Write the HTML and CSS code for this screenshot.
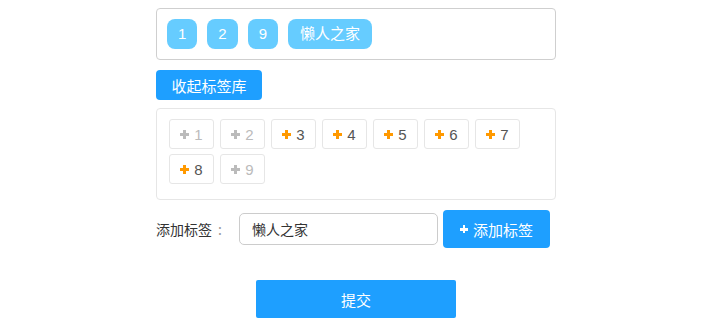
FILE: index.html
```html
<!DOCTYPE html>
<html lang="zh">
<head>
<meta charset="utf-8">
<title>标签</title>
<link rel="stylesheet" href="styles.css">
</head>
<body>
<div class="wrap">
  <div class="chosen">
    <span class="tag">1</span>
    <span class="tag">2</span>
    <span class="tag">9</span>
    <span class="tag wide">懒人之家</span>
  </div>
  <button class="toggle">收起标签库</button>
  <div class="library">
    <span class="item off"><i class="plus"></i>1</span>
    <span class="item off"><i class="plus"></i>2</span>
    <span class="item"><i class="plus"></i>3</span>
    <span class="item"><i class="plus"></i>4</span>
    <span class="item"><i class="plus"></i>5</span>
    <span class="item"><i class="plus"></i>6</span>
    <span class="item"><i class="plus"></i>7</span>
    <span class="item"><i class="plus"></i>8</span>
    <span class="item off"><i class="plus"></i>9</span>
  </div>
  <div class="add-row">
    <label class="add-label">添加标签<span class="colon">:</span></label>
    <input class="add-input" type="text" value="懒人之家">
    <button class="add-btn"><i class="plus"></i>添加标签</button>
  </div>
  <div class="submit-row">
    <button class="submit">提交</button>
  </div>
</div>
</body>
</html>
```
FILE: styles.css
```css
* { box-sizing: border-box; }
body {
  margin: 0;
  padding-top: 8px;
  background: #fff;
  font-family: "Liberation Sans", "Noto Sans CJK SC", sans-serif;
  font-size: 14px;
  color: #333;
}
.wrap {
  width: 400px;
  margin-left: 156px;
}
.chosen {
  border: 1px solid #cfcfcf;
  border-radius: 4px;
  padding: 10px;
  display: flex;
  gap: 10px;
  height: 52px;
}
.tag {
  height: 30px;
  line-height: 30px;
  padding: 0 11px;
  min-width: 30px;
  text-align: center;
  background: #66ccff;
  color: #fff;
  border-radius: 8px;
  font-size: 15px;
}
.tag.wide { padding: 0 12px; }
.toggle {
  display: block;
  margin-top: 10px;
  width: 106px;
  height: 30px;
  border: 0;
  border-radius: 4px;
  background: #1e9fff;
  color: #fff;
  font-family: "Noto Sans CJK SC", sans-serif;
  font-size: 15px;
  padding: 0;
}
.library {
  margin-top: 8px;
  border: 1px solid #e6e6e6;
  border-radius: 4px;
  padding: 10px 12px;
  display: flex;
  flex-wrap: wrap;
  column-gap: 6px;
  row-gap: 5px;
  height: 92px;
  align-content: flex-start;
}
.item {
  width: 45px;
  height: 30px;
  border: 1px solid #e6e6e6;
  border-radius: 3px;
  display: flex;
  align-items: center;
  justify-content: center;
  gap: 5px;
  color: #555;
  font-size: 15px;
}
.item .plus { color: #ff9900; }
.item.off { color: #bbb; }
.item.off .plus { color: #bbb; }
.plus {
  display: inline-block;
  position: relative;
  width: 9px;
  height: 9px;
  color: #fff;
}
.plus::before, .plus::after {
  content: "";
  position: absolute;
  background: currentColor;
}
.plus::before { left: 0; right: 0; top: 3px; height: 3px; }
.plus::after { top: 0; bottom: 0; left: 3px; width: 3px; }
.add-row {
  margin-top: 10px;
  display: flex;
  align-items: center;
  height: 38px;
}
.add-label {
  width: 83px;
  font-family: "Noto Sans CJK SC", sans-serif;
  font-size: 14px;
  color: #333;
}
.colon {
  margin-left: 6px;
  color: #999;
}
.add-input {
  width: 199px;
  height: 32px;
  border: 1px solid #cccccc;
  border-radius: 5px;
  padding: 0 12px;
  font-family: "Noto Sans CJK SC", sans-serif;
  font-size: 14px;
  color: #333;
  outline: none;
}
.add-btn {
  margin-left: 5px;
  width: 107px;
  height: 38px;
  border: 0;
  border-radius: 4px;
  background: #1e9fff;
  color: #fff;
  display: flex;
  align-items: center;
  justify-content: center;
  gap: 5px;
  font-family: "Noto Sans CJK SC", sans-serif;
  font-size: 15px;
  padding: 0;
}
.add-btn .plus { width: 8px; height: 8px; }
.add-btn .plus::before { top: 3px; height: 2.5px; }
.add-btn .plus::after { left: 3px; width: 2.5px; }
.submit-row {
  margin-top: 32px;
  display: flex;
  justify-content: center;
}
.submit {
  width: 200px;
  height: 38px;
  border: 0;
  border-radius: 2px;
  background: #1e9fff;
  color: #fff;
  font-family: "Noto Sans CJK SC", sans-serif;
  font-size: 15px;
  padding: 0;
}
```
